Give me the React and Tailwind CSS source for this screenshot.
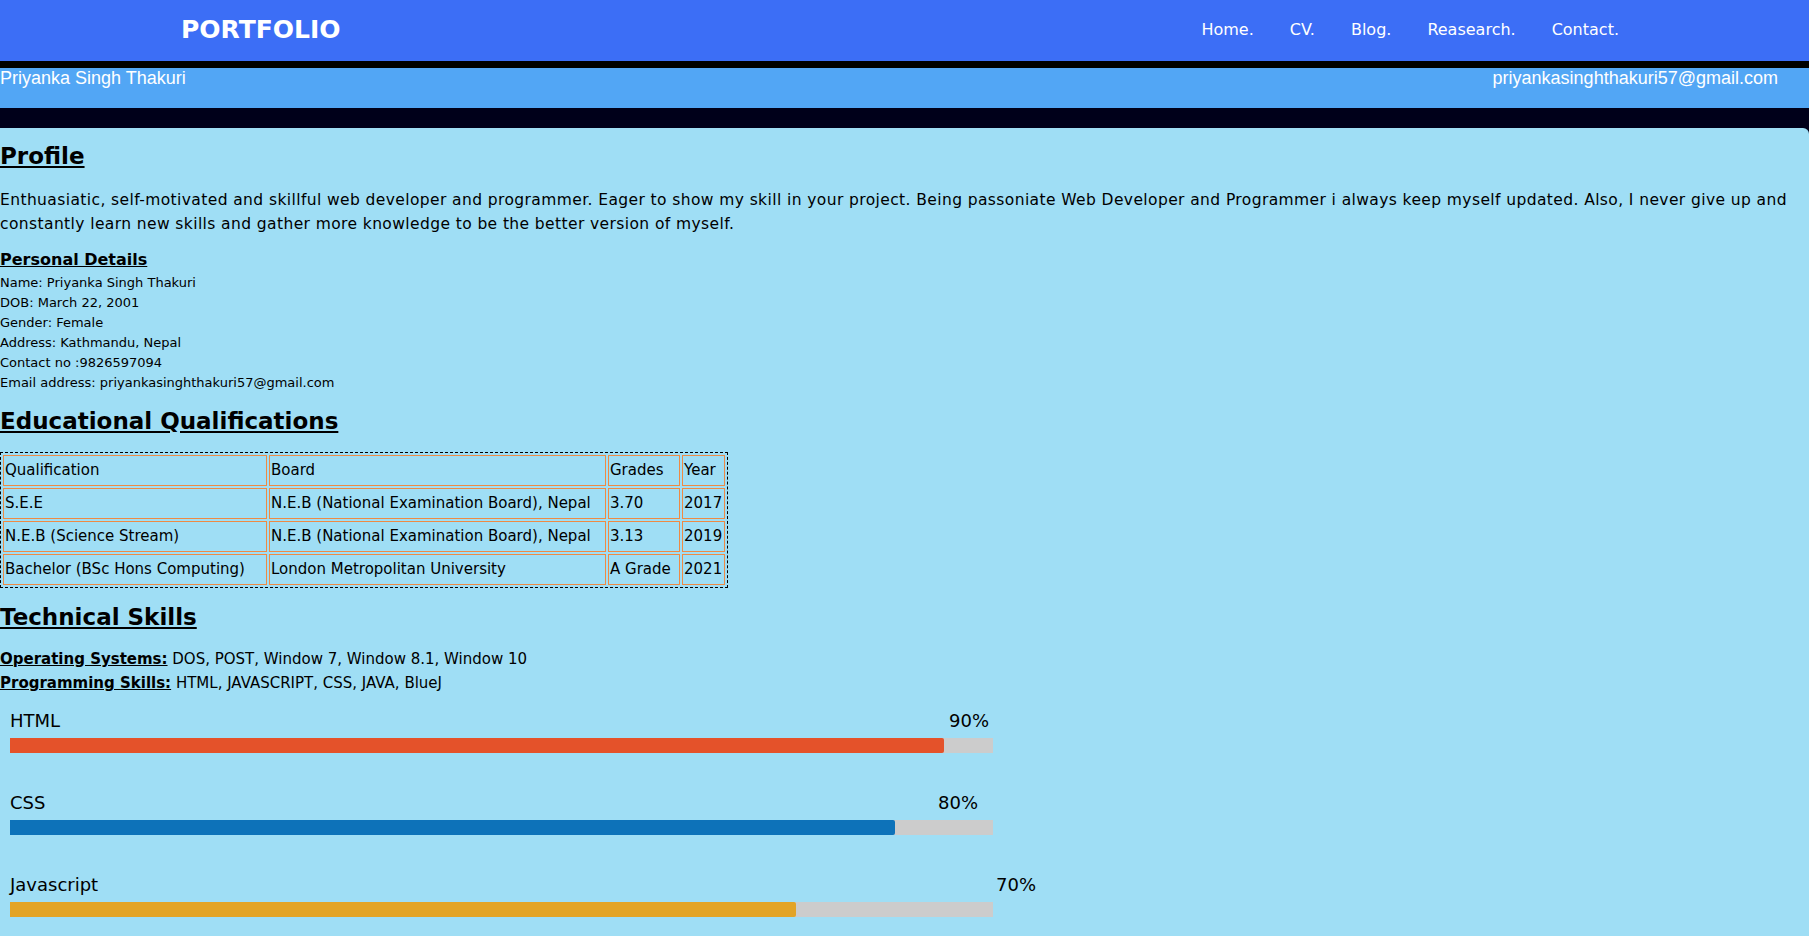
import React from 'react';

const navLinks = ['Home.', 'CV.', 'Blog.', 'Reasearch.', 'Contact.'];

const details = [
  'Name: Priyanka Singh Thakuri',
  'DOB: March 22, 2001',
  'Gender: Female',
  'Address: Kathmandu, Nepal',
  'Contact no :9826597094',
  'Email address: priyankasinghthakuri57@gmail.com',
];

const rows = [
  ['Qualification', 'Board', 'Grades', 'Year'],
  ['S.E.E', 'N.E.B (National Examination Board), Nepal', '3.70', '2017'],
  ['N.E.B (Science Stream)', 'N.E.B (National Examination Board), Nepal', '3.13', '2019'],
  ['Bachelor (BSc Hons Computing)', 'London Metropolitan University', 'A Grade', '2021'],
];

const colWidths = ['w-[264px]', 'w-[337px]', 'w-[72px]', 'w-[43px]'];

const skills = [
  { name: 'HTML', pct: '90%', row: 'w-[979px]', fill: 'w-[95%] bg-[#e4522a]' },
  { name: 'CSS', pct: '80%', row: 'w-[968px]', fill: 'w-[90%] bg-[#0d72b9]' },
  { name: 'Javascript', pct: '70%', row: 'w-[1026px]', fill: 'w-[80%] bg-[#e3a426]' },
];

export default function App() {
  return (
    <div className="min-h-screen flex flex-col bg-[#00001a] font-['DejaVu_Sans',sans-serif] text-black">
      {/* top navigation */}
      <nav className="h-[61px] shrink-0 bg-[#3c6ef6] flex items-center justify-between pl-[181px] pr-[190px] text-white">
        <div className="text-[25px] font-bold leading-none pb-[3px]">PORTFOLIO</div>
        <ul className="flex items-center gap-[36px] text-[16px] pb-[2px]">
          {navLinks.map((link) => (
            <li key={link}>{link}</li>
          ))}
        </ul>
      </nav>

      <div className="h-[7px] shrink-0 bg-black"></div>

      {/* name bar */}
      <div className="h-[40px] shrink-0 bg-[#52a6f5] flex justify-between items-start pr-[31px] text-white font-['Liberation_Sans',Arial,sans-serif] text-[18px] leading-[21px]">
        <span>Priyanka Singh Thakuri</span>
        <span>priyankasinghthakuri57@gmail.com</span>
      </div>

      <div className="h-[20px] shrink-0"></div>

      {/* main content */}
      <main className="flex-1 bg-[#9fdef5] rounded-tr-md pt-[10px] pb-6">
        <h2 className="text-[23px] leading-[36px] font-bold underline">Profile</h2>
        <p className="mt-[14px] text-[15.5px] tracking-[0.4px] leading-[24px]">
          Enthuasiatic, self-motivated and skillful web developer and programmer. Eager to show my skill in your project. Being passoniate Web Developer and Programmer i always keep myself updated. Also, I never give up and constantly learn new skills and gather more knowledge to be the better version of myself.
        </p>

        <h3 className="mt-[12px] text-[16px] leading-[24px] font-bold underline">Personal Details</h3>
        <div className="mt-px text-[13px] leading-[20px]">
          {details.map((line) => (
            <div key={line}>{line}</div>
          ))}
        </div>

        <h2 className="mt-[10px] text-[23px] leading-[36px] font-bold underline">Educational Qualifications</h2>
        <table className="mt-[13px] table-fixed border border-dashed border-black border-separate border-spacing-[2px] text-[15px]">
          <tbody>
            {rows.map((row, i) => (
              <tr key={i}>
                {row.map((cell, j) => (
                  <td
                    key={j}
                    className={`${colWidths[j]} border border-[#ee8a44] px-px py-[3px] leading-[23px] whitespace-nowrap`}
                  >
                    {cell}
                  </td>
                ))}
              </tr>
            ))}
          </tbody>
        </table>

        <h2 className="mt-[11px] text-[23px] leading-[36px] font-bold underline">Technical Skills</h2>
        <div className="mt-[12px] text-[15px] leading-[24px]">
          <div>
            <span className="font-bold underline">Operating Systems:</span> DOS, POST, Window 7, Window 8.1, Window 10
          </div>
          <div>
            <span className="font-bold underline">Programming Skills:</span> HTML, JAVASCRIPT, CSS, JAVA, BlueJ
          </div>
        </div>

        <div className="mt-[12px] pl-[10px] flex flex-col gap-[36px]">
          {skills.map((s) => (
            <div key={s.name}>
              <div className={`${s.row} flex justify-between text-[18px] leading-[27px]`}>
                <span>{s.name}</span>
                <span>{s.pct}</span>
              </div>
              <div className="mt-[4px] w-[983px] h-[15px] bg-[#cccccc]">
                <div className={`${s.fill} h-full rounded-r-[2px]`}></div>
              </div>
            </div>
          ))}
        </div>
      </main>
    </div>
  );
}
